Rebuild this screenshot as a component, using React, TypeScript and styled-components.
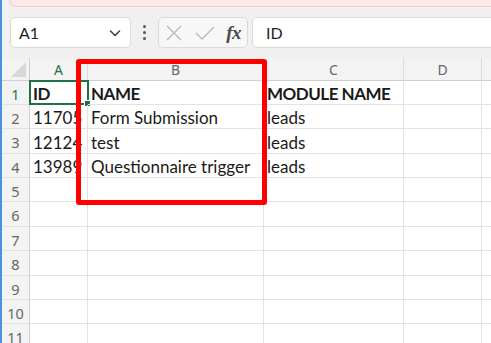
import React from "react";
import styled, { createGlobalStyle } from "styled-components";

const Global = createGlobalStyle`
  html, body { margin: 0; padding: 0; background: #f0f0f0; }
  body { width: 491px; height: 343px; overflow: hidden; font-family: "Lato", "Liberation Sans", sans-serif; }
`;

const Page = styled.div`
  position: relative;
  width: 491px;
  height: 343px;
  box-sizing: border-box;
  border-left: 2px solid #4a8fe0;
  background: #f0f0f0;
  display: flex;
  flex-direction: column;
  overflow: hidden;
`;

const Banner = styled.div`
  margin-left: 7px;
  width: 520px;
  height: 7px;
  box-sizing: border-box;
  background: #fde7e9;
  border: 1px solid #f1cdd0;
  border-top: none;
  border-radius: 0 0 7px 7px;
  flex-shrink: 0;
`;

const Toolbar = styled.div`
  margin-top: 10px;
  padding-left: 8px;
  height: 31px;
  display: flex;
  align-items: stretch;
  flex-shrink: 0;
`;

const Box = styled.div<{ $w?: number; $grow?: boolean }>`
  box-sizing: border-box;
  background: #ffffff;
  border: 1px solid #dadada;
  border-radius: 5px;
  display: flex;
  align-items: center;
  ${(p) => (p.$w ? `width: ${p.$w}px;` : "")}
  ${(p) => (p.$grow ? "flex: 1; margin-right: -10px;" : "")}
`;

const NameBox = styled(Box)`
  justify-content: space-between;
  padding: 0 7px 0 8px;
  font-size: 16px;
  color: #222;
`;

const Dots = styled.div`
  width: 27px;
  display: flex;
  flex-direction: column;
  align-items: center;
  justify-content: center;
  gap: 3px;
  & > span {
    width: 3px;
    height: 3px;
    border-radius: 50%;
    background: #555;
  }
`;

const FxBox = styled(Box)`
  background: #f7f7f7;
  padding: 0 6px 0 5px;
  justify-content: space-between;
  margin-right: 4px;
`;

const Fx = styled.span`
  font-family: "Liberation Serif", serif;
  font-style: italic;
  font-weight: bold;
  font-size: 19px;
  color: #4a4a4a;
  letter-spacing: -0.5px;
`;

const Formula = styled(Box)`
  padding-left: 13px;
  font-size: 16px;
  color: #222;
`;

const Sheet = styled.div`
  margin-top: 10px;
  display: grid;
  grid-template-columns: 28px 58px 176px 140px 78px 40px;
  grid-template-rows: 23px 24px 24px 25px 24px 24px 25px 24px 25px 24px 24px 25px;
  background: #ffffff;
`;

const ColHead = styled.div<{ $active?: boolean }>`
  background: #f3f3f3;
  border-right: 1px solid #dcdcdc;
  border-bottom: 1px solid ${(p) => (p.$active ? "#1e7145" : "#d0d0d0")};
  color: ${(p) => (p.$active ? "#1e7145" : "#666")};
  font-family: "Noto Sans", "Liberation Sans", sans-serif;
  font-size: 14px;
  display: flex;
  align-items: center;
  justify-content: center;
  box-sizing: border-box;
`;

const Corner = styled.div`
  background: #f3f3f3;
  border-right: 1px solid #d0d0d0;
  border-bottom: 1px solid #d0d0d0;
  box-sizing: border-box;
  position: relative;
  &::after {
    content: "";
    position: absolute;
    right: 3px;
    bottom: 3px;
    width: 0;
    height: 0;
    border-left: 15px solid transparent;
    border-bottom: 15px solid #d8d8d8;
  }
`;

const RowHead = styled.div<{ $active?: boolean }>`
  background: #f3f3f3;
  border-right: 1px solid #d0d0d0;
  border-bottom: 1px solid #e2e2e2;
  color: ${(p) => (p.$active ? "#1e7145" : "#666")};
  font-family: "Noto Sans", "Liberation Sans", sans-serif;
  font-size: 14.5px;
  padding-top: 2px;
  display: flex;
  align-items: center;
  justify-content: center;
  box-sizing: border-box;
`;

const Cell = styled.div<{ $bold?: boolean }>`
  border-right: 1px solid #e2e2e2;
  border-bottom: 1px solid #e2e2e2;
  box-sizing: border-box;
  padding-left: 3px;
  padding-top: 2px;
  display: flex;
  align-items: center;
  white-space: nowrap;
  overflow: visible;
  font-size: 17px;
  font-weight: ${(p) => (p.$bold ? 700 : 400)};
  letter-spacing: ${(p) => (p.$bold ? "-0.5px" : "0")};
  color: #1a1a1a;
  position: relative;
`;

const Selected = styled.div`
  position: absolute;
  left: -1px;
  top: -1px;
  right: -2px;
  bottom: -1px;
  border: 2px solid #1e7145;
  pointer-events: none;
  &::after {
    content: "";
    position: absolute;
    right: -4px;
    bottom: -4px;
    width: 5px;
    height: 5px;
    background: #1e7145;
    border: 1px solid #fff;
  }
`;

const Annotation = styled.div`
  position: absolute;
  left: 74px;
  top: 59px;
  width: 191px;
  height: 146px;
  box-sizing: border-box;
  border: 5px solid #ff0000;
  border-radius: 3px;
  pointer-events: none;
`;

const cols = ["A", "B", "C", "D", ""];
const data: string[][] = [
  ["ID", "NAME", "MODULE NAME", "", ""],
  ["11705", "Form Submission", "leads", "", ""],
  ["12124", "test", "leads", "", ""],
  ["13989", "Questionnaire trigger", "leads", "", ""],
];

const Chevron = () => (
  <svg width="16" height="16" viewBox="0 0 16 16" fill="none" stroke="#444" strokeWidth="1.6" strokeLinecap="round" strokeLinejoin="round">
    <path d="M3.5 6 L8 10.5 L12.5 6" />
  </svg>
);

const Cross = () => (
  <svg width="20" height="20" viewBox="0 0 20 20" fill="none" stroke="#b9b9b9" strokeWidth="1.3">
    <path d="M3 3 L17 17 M17 3 L3 17" />
  </svg>
);

const Check = () => (
  <svg width="22" height="20" viewBox="0 0 22 20" fill="none" stroke="#b9b9b9" strokeWidth="1.3">
    <path d="M2 10 L8 16 L20 4" />
  </svg>
);

export default function App() {
  return (
    <>
      <Global />
      <Page>
        <Banner />
        <Toolbar>
          <NameBox $w={121}>
            <span>A1</span>
            <Chevron />
          </NameBox>
          <Dots>
            <span />
            <span />
            <span />
          </Dots>
          <FxBox $w={90}>
            <Cross />
            <Check />
            <Fx>fx</Fx>
          </FxBox>
          <Formula $grow>ID</Formula>
        </Toolbar>
        <Sheet>
          <Corner />
          {cols.map((c, i) => (
            <ColHead key={i} $active={c === "A"}>
              {c}
            </ColHead>
          ))}
          {Array.from({ length: 11 }, (_, r) => (
            <React.Fragment key={r}>
              <RowHead $active={r === 0}>{r + 1}</RowHead>
              {cols.map((c, ci) => {
                const v = data[r]?.[ci] ?? "";
                return (
                  <Cell key={ci} $bold={r === 0}>
                    {v}
                    {r === 0 && ci === 0 && <Selected />}
                  </Cell>
                );
              })}
            </React.Fragment>
          ))}
        </Sheet>
        <Annotation />
      </Page>
    </>
  );
}
